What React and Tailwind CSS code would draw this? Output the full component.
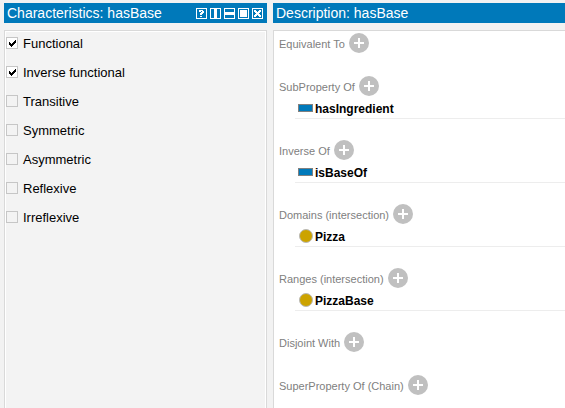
import React from "react";

const characteristics = [
  { label: "Functional", checked: true },
  { label: "Inverse functional", checked: true },
  { label: "Transitive", checked: false },
  { label: "Symmetric", checked: false },
  { label: "Asymmetric", checked: false },
  { label: "Reflexive", checked: false },
  { label: "Irreflexive", checked: false },
];

const sections = [
  { title: "Equivalent To", items: [] },
  { title: "SubProperty Of", items: [{ name: "hasIngredient", kind: "property" }] },
  { title: "Inverse Of", items: [{ name: "isBaseOf", kind: "property" }] },
  { title: "Domains (intersection)", items: [{ name: "Pizza", kind: "class" }] },
  { title: "Ranges (intersection)", items: [{ name: "PizzaBase", kind: "class" }] },
  { title: "Disjoint With", items: [] },
  { title: "SuperProperty Of (Chain)", items: [] },
];

const windowButtons = [
  {
    label: "Help",
    shape: <path d="M3 2h4v1h1v2h-1v1h-1v1h-2v-2h1v-1h1v-1h-1v1h-2zM4 8h2v1h-2z" />,
  },
  {
    label: "Split vertically",
    shape: <path d="M1 1h3v9h-3zM7 1h3v9h-3z" fill="#0079ba" />,
    filled: true,
  },
  {
    label: "Split horizontally",
    shape: <path d="M1 1h9v3h-9zM1 7h9v3h-9z" fill="#0079ba" />,
    filled: true,
  },
  { label: "Float", shape: <path d="M2 2h7v7h-7z" /> },
  {
    label: "Close",
    shape: <path d="M2 2h2v1h1v1h1v-1h1v-1h2v2h-1v1h-1v1h1v1h1v2h-2v-1h-1v-1h-1v1h-1v1h-2v-2h1v-1h1v-1h-1v-1h-1z" />,
  },
];

function WindowButton({ label, shape, filled }) {
  return (
    <button type="button" aria-label={label} className="block size-[11px]">
      <svg viewBox="0 0 11 11" className="block size-[11px] fill-white" shapeRendering="crispEdges">
        {filled ? <path d="M0 0h11v11h-11z" /> : <path fillRule="evenodd" d="M0 0h11v11h-11zM1 1v9h9v-9z" />}
        {shape}
      </svg>
    </button>
  );
}

function TitleBar({ title, children }) {
  return (
    <header className="flex h-5 items-center justify-between bg-[#0079ba] pr-1 pl-[3px] text-white">
      <h2 className="text-[14px] leading-5 whitespace-nowrap">{title}</h2>
      {children}
    </header>
  );
}

function CheckRow({ label, checked }) {
  return (
    <label className="flex h-[29px] items-center gap-[5px] pb-px text-[13px] leading-5 text-black">
      <span className="grid size-3 shrink-0">
        <input
          type="checkbox"
          defaultChecked={checked}
          className="peer col-start-1 row-start-1 size-3 appearance-none border border-[#c6c6c6] bg-[#f3f3f3] checked:bg-white"
        />
        <svg
          viewBox="0 0 12 12"
          className="pointer-events-none invisible col-start-1 row-start-1 size-3 fill-black peer-checked:visible"
          shapeRendering="crispEdges"
        >
          <path d="M3 5h1v1h1v1h1v-1h1v-1h1v-1h1v-1h1v3h-1v1h-1v1h-1v1h-1v1h-1v-1h-1v-1h-1z" />
        </svg>
      </span>
      <span className="pt-[2px]">{label}</span>
    </label>
  );
}

function EntityIcon({ kind }) {
  return kind === "class" ? (
    <span className="size-[14px] shrink-0 rounded-full border border-[#b9b9b9] bg-[#cca300]" />
  ) : (
    <span className="h-2 w-[15px] border border-[#808080] bg-[#0079ba]" />
  );
}

function Section({ title, items }) {
  return (
    <section className="pb-[21px]">
      <div className="flex h-[22px] items-start gap-1 pl-[5px]">
        <h3 className="pt-px text-[11px] leading-5 whitespace-nowrap text-[#808080]">{title}</h3>
        <button type="button" aria-label={`Add ${title}`} className="block size-5">
          <svg viewBox="0 0 20 20" className="block size-5">
            <circle cx="10" cy="10" r="10" fill="#c0c0c0" />
            <path d="M9 5h2v4h4v2h-4v4h-2v-4h-4v-2h4z" fill="#fff" />
          </svg>
        </button>
      </div>
      {items.map((item) => (
        <div
          key={item.name}
          className="ml-[21px] flex h-[21px] items-center gap-[2px] border-b border-[#ededed] pl-[3px] text-[12px] leading-5 font-bold text-black"
        >
          <span className="flex w-[15px] shrink-0 items-center justify-end">
            <EntityIcon kind={item.kind} />
          </span>
          <span className="pt-px">{item.name}</span>
        </div>
      ))}
    </section>
  );
}

export default function App() {
  return (
    <main className="flex h-screen gap-[6px] overflow-hidden bg-[#f2f2f2] pt-[3px] pl-1 font-['Liberation_Sans',Arial,sans-serif]">
      <section className="flex w-[263px] shrink-0 flex-col gap-[7px]">
        <TitleBar title="Characteristics: hasBase">
          <div className="flex gap-[3px]">
            {windowButtons.map((button) => (
              <WindowButton key={button.label} {...button} />
            ))}
          </div>
        </TitleBar>
        <div className="flex-1 border border-b-0 border-[#d9d9d9]">
          <div className="h-full border border-b-0 border-white bg-[#f3f3f3]">
            <div className="-mt-[3px]">
              {characteristics.map((item) => (
                <CheckRow key={item.label} {...item} />
              ))}
            </div>
          </div>
        </div>
      </section>
      <section className="flex min-w-0 flex-1 flex-col gap-[7px]">
        <TitleBar title="Description: hasBase" />
        <div className="flex-1 border-t border-l border-[#d9d9d9] bg-white pt-[2px]">
          {sections.map((section) => (
            <Section key={section.title} {...section} />
          ))}
        </div>
      </section>
    </main>
  );
}
